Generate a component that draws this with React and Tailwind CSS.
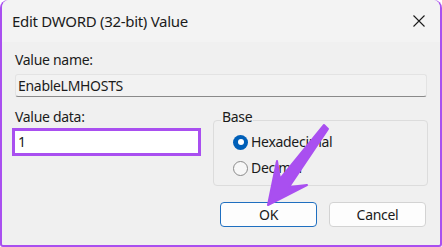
import React from 'react';

const PURPLE = '#a94ff0';

function Radio({ checked, label }) {
  return (
    <div className="flex h-[20px] items-center gap-[3px]">
      {checked ? (
        <span className="flex h-[15px] w-[15px] items-center justify-center rounded-full bg-[#005fb8]">
          <span className="h-[6px] w-[6px] rounded-full bg-white" />
        </span>
      ) : (
        <span className="h-[15px] w-[15px] rounded-full border border-[#8a8a8a] bg-[#f7f7f7]" />
      )}
      <span>{label}</span>
    </div>
  );
}

function Arrow() {
  // tip near the OK button, tail up toward the Base box
  return (
    <svg className="pointer-events-none absolute left-0 top-0" width="442" height="247" viewBox="0 0 442 247">
      <polygon
        points="268,205 277,161 280,179 324,125 328,129 289,187 307,185"
        fill={PURPLE}
        stroke={PURPLE}
        strokeWidth="2"
        strokeLinejoin="round"
      />
    </svg>
  );
}

export default function App() {
  return (
    <div
      className="relative h-[247px] w-[442px] overflow-hidden bg-white tracking-[-0.3px] text-[#1b1b1b]"
      style={{ fontFamily: '"Noto Sans", "Open Sans", sans-serif' }}
    >
      <div className="flex h-full flex-col rounded-t-[8px] rounded-b-[3px] border-x-2 border-b-2 border-[#a94ff0] bg-[#f0f0f0]">
        {/* title bar */}
        <div className="flex h-[42px] items-center justify-between rounded-t-[8px] bg-[#f3f3f3] pl-[10px] pr-[15px]">
          <span className="text-[15px]">Edit DWORD (32-bit) Value</span>
          <svg width="12" height="12" viewBox="0 0 12 12">
            <path d="M0.5 0.5 L11.5 11.5 M11.5 0.5 L0.5 11.5" stroke="#1b1b1b" strokeWidth="1.1" />
          </svg>
        </div>

        <div className="flex flex-col px-[13px] pt-[9px] text-[14px] leading-[18px]">
          <span>Value name:</span>
          <div className="mt-[5px] flex h-[23px] items-center rounded-[3px] border border-[#e3e3e3] border-b-[#8a8a8a] bg-[#f2f2f2] px-[2px]">
            EnableLMHOSTS
          </div>

          <div className="mt-[11px] flex items-start">
            <div className="flex w-[198px] flex-col">
              <span>Value data:</span>
              <div className="-ml-[3px] mt-[2px] flex h-[28px] w-[189px] items-center border-[3px] border-[#a94ff0] bg-white pl-[3px]">
                1
              </div>
            </div>

            <div className="relative -mr-[1px] mt-[12px] h-[66px] flex-1 rounded-[4px] border border-[#dcdcdc]">
              <span className="absolute -top-[13px] left-[7px] bg-[#f0f0f0] px-[1px]">Base</span>
              <div className="flex flex-col gap-[6px] pl-[19px] pt-[11px]">
                <Radio checked label="Hexadecimal" />
                <Radio label="Decimal" />
              </div>
            </div>
          </div>

          <div className="mr-[1px] mt-[16px] flex justify-end gap-[12px]">
            <button className="flex h-[25px] w-[97px] items-center justify-center rounded-[4px] border border-[#1f6fc0] bg-[#fdfdfd]">
              OK
            </button>
            <button className="flex h-[25px] w-[97px] items-center justify-center rounded-[4px] border border-[#d3d3d3] bg-[#fdfdfd]">
              Cancel
            </button>
          </div>
        </div>
      </div>
      <Arrow />
    </div>
  );
}
